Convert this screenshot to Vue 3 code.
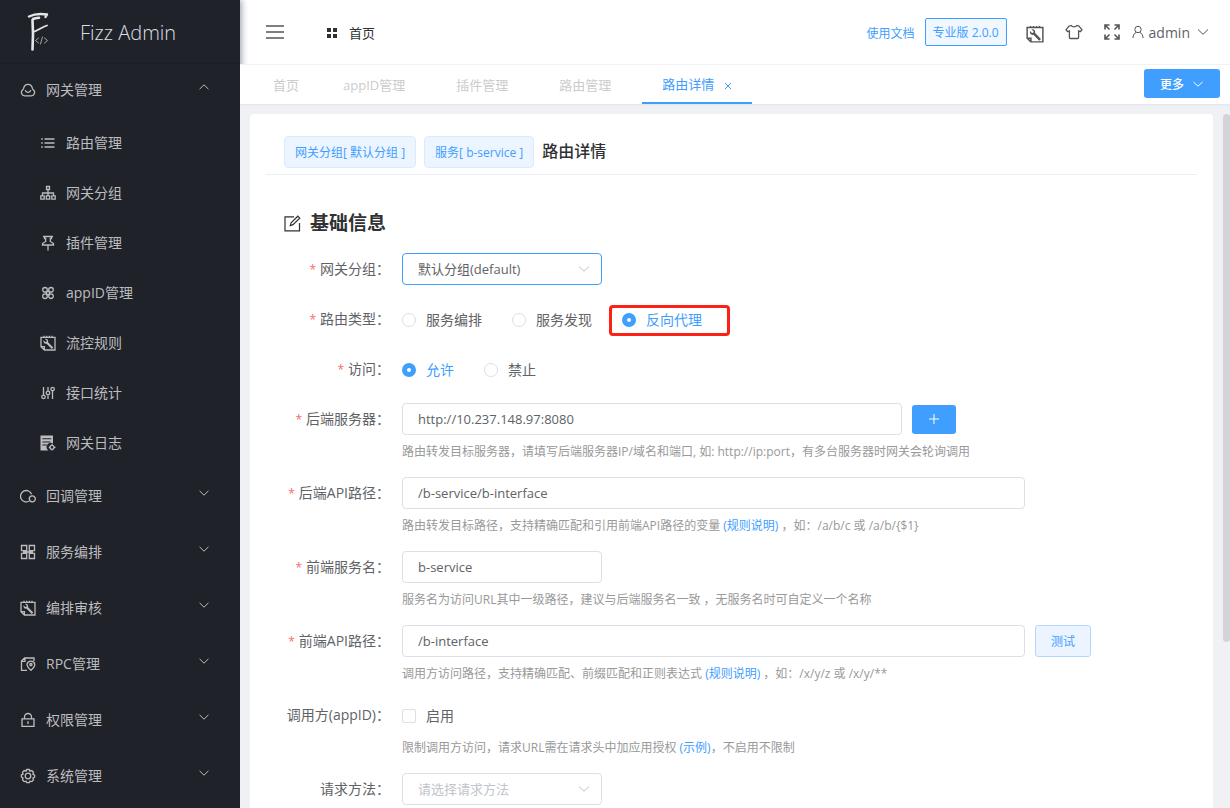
<script setup>
import { ref } from 'vue'

const icons = {
  cloud: { s: 'M4.6 13.8h6.8a3.3 3.3 0 0 0 2.4-5.5c-.5-.6-1-.9-1.3-1.6C12 3.900 10.300 2.300 8 2.300S4 3.900 3.500 6.700c-.3.700-.8 1-1.300 1.600a3.300 3.300 0 0 0 2.400 5.500zM5.200 8.200a2.900 2.900 0 0 0 5.600 0' },
  list: { s: 'M4.500 4h10M4.500 8h10M4.500 12h10M1.200 4h1.600M1.200 8h1.600M1.200 12h1.600' },
  tree: { s: 'M6.500 1.500h3v3h-3zM.8 10.800h3.400v3.400H.8zM6.300 10.800h3.400v3.400H6.300zM11.800 10.800h3.400v3.400h-3.400zM8 4.500v6.300M2.500 10.800V8h11v2.800' },
  pin: { s: 'M3 1.500h10M4.500 1.500v2h1.200v3L2.500 8.500v1.500h11V8.500l-3.200-2v-3h1.200v-2M8 10v5.500' },
  clover: { s: 'M7.300 4.800A2.300 2.300 0 1 1 2.700 4.800a2.300 2.300 0 0 1 4.600 0zM13.300 4.800A2.300 2.300 0 1 1 8.700 4.800a2.300 2.300 0 0 1 4.600 0zM7.300 11.200a2.300 2.300 0 1 1-4.600 0 2.300 2.300 0 0 1 4.600 0zM13.300 11.200a2.300 2.300 0 1 1-4.600 0 2.300 2.300 0 0 1 4.600 0zM6.500 6.500h3v3h-3z' },
  wrench: { s: 'M4.400 15L1 11.700V2.300H15V15zM1 11.700h3.400V15M4 .8v1.500M6.700 .8v1.500M9.400 .8v1.500M12 .8v1.500', f: 'M5 3.900l1.700 1.700-.2 1.200-1.200.2-1.700-1.700c-.7 2.100 1 3.900 3 3.400l5.200 5.200 1.500-1.500-5.200-5.200c.5-2.200-1.200-3.900-3.100-3.300z' },
  sliders: { s: 'M3.500 2v8.200M3.500 13.500v.5M8 2v4M8 9.800V14M12.500 5.800V14M12.500 2v.2M5.200 11.900a1.700 1.700 0 1 1-3.400 0 1.700 1.700 0 0 1 3.400 0zM9.800 7.900a1.800 1.800 0 1 1-3.600 0 1.800 1.800 0 0 1 3.600 0zM14.300 4a1.700 1.700 0 1 1-3.400 0 1.700 1.700 0 0 1 3.400 0z' },
  log: { f: 'M.5.500h12.500v8.200a3.800 3.800 0 0 0-4.500 6.800h-8zM2.300 3.300v1h9v-1zM2.300 6.400v1h8v-1zM2.300 9.500v1h5v-1z', s: 'M14 12.300a2 2 0 1 1-4 0 2 2 0 0 1 4 0zM12 9v1.300M12 14.300v1.200M8.800 12.300H10M14 12.300h1.500' },
  circles: { s: 'M9 13.200A5.700 5.700 0 1 1 11.600 6.300M15.300 10.800a3 3 0 1 1-6 0 3 3 0 0 1 6 0z' },
  menu: { s: 'M1.500 1.500h5.200v5.200H1.500zM9.300 1.500h5.200v5.200H9.300zM1.500 9.300h5.200v5.200H1.500zM9.300 9.300h5.200v5.200H9.300zM3 8h10' },
  rpc: { s: 'M7 14.300H1.500V5l3-3h9.500v3M5 2v3.300H1.500M11 14.300c-2-1.700-4-3.900-4-6a4 4 0 0 1 7.800 0c0 2.100-1.800 4.300-3.800 6zM12 8.400a1.100 1.100 0 1 1-2.200 0 1.100 1.100 0 0 1 2.200 0z' },
  lock: { s: 'M2 6.800h12v7.500H2zM4.500 6.800V5a3.500 3.500 0 0 1 7 0v1.800M8 9.300v2.800' },
  gear: { s: 'M6.700 1.500h2.600l.6 1.600 1.900-.5 1.700 1.900-.6 1.700 1.700 1v2l-1.700.9.600 1.700-1.700 1.800-1.900-.4-.6 1.500H6.700l-.7-1.500-1.800.4-1.700-1.800.5-1.700L1.400 9V7l1.700-.9-.6-1.700 1.700-1.800 1.800.5zM8 5.200a2.800 2.800 0 1 0 0 5.600 2.800 2.800 0 0 0 0-5.600z' },
}

const groupItems = [
  { icon: 'list', text: '路由管理' },
  { icon: 'tree', text: '网关分组' },
  { icon: 'pin', text: '插件管理' },
  { icon: 'clover', text: 'appID管理' },
  { icon: 'wrench', text: '流控规则' },
  { icon: 'sliders', text: '接口统计' },
  { icon: 'log', text: '网关日志' },
]
const menus = [
  { icon: 'cloud', text: '网关管理', children: groupItems },
  { icon: 'circles', text: '回调管理' },
  { icon: 'menu', text: '服务编排' },
  { icon: 'wrench', text: '编排审核' },
  { icon: 'rpc', text: 'RPC管理' },
  { icon: 'lock', text: '权限管理' },
  { icon: 'gear', text: '系统管理' },
]
const tabs = ['首页', 'appID管理', '插件管理', '路由管理']
const types = ['服务编排', '服务发现', '反向代理']

const group = ref('default')
const type = ref('反向代理')
const access = ref('允许')
const backend = ref('http://10.237.148.97:8080')
const backendPath = ref('/b-service/b-interface')
const service = ref('b-service')
const frontPath = ref('/b-interface')
const appEnabled = ref(false)
const method = ref('')
</script>

<template>
  <div class="layout">
    <aside class="side">
      <div class="brand">
        <svg class="logo" width="24" height="40" viewBox="0 0 24 40" fill="none" stroke="#e4e5e7" stroke-linecap="round" stroke-linejoin="round">
          <path d="M2 4.500C6 2.500 14 1.500 20 2.500l-1.500 2.500" stroke-width="2.400" />
          <path d="M6 7c2-.8 4-1 6-1.200M5.500 8l.5 14-.5 15.500" stroke-width="2.600" />
          <path d="M6 20c4-1 9-5 14-6.500" stroke-width="1.800" />
          <path d="M11.500 26l-3 2.500 3 2.500M17.500 26l3 2.500-3 2.500M15.500 25l-2 7" stroke="#a5a6aa" stroke-width="1" />
        </svg>
        <span class="brand-name">Fizz Admin</span>
      </div>
      <nav class="menu">
        <template v-for="m in menus" :key="m.text">
          <a href="#" class="item">
            <svg class="ico" viewBox="0 0 16 16"><path v-if="icons[m.icon].f" class="fill" :d="icons[m.icon].f" /><path class="line" :d="icons[m.icon].s" /></svg>
            <span class="item-text">{{ m.text }}</span>
            <svg class="arrow" viewBox="0 0 12 12"><path class="line thin" :d="m.children ? 'M1.500 8.200L6 3.800l4.500 4.400' : 'M1.500 3.800L6 8.200l4.500-4.400'" /></svg>
          </a>
          <a v-for="c in m.children" :key="c.text" href="#" class="item sub">
            <svg class="ico" viewBox="0 0 16 16"><path v-if="icons[c.icon].f" class="fill" :d="icons[c.icon].f" fill-rule="evenodd" /><path class="line" :d="icons[c.icon].s" /></svg>
            <span class="item-text">{{ c.text }}</span>
          </a>
        </template>
      </nav>
    </aside>

    <div class="body">
      <header class="top">
        <button class="plain burger" type="button" aria-label="折叠菜单">
          <svg width="20" height="16" viewBox="0 0 20 16"><path d="M1 2h18M1 8h18M1 14h18" stroke="#555" stroke-width="1.500" /></svg>
        </button>
        <a href="#" class="crumb">
          <svg width="10" height="10" viewBox="0 0 10 10"><path d="M0 0h4v4H0zM6 0h4v4H6zM0 6h4v4H0zM6 6h4v4H6z" fill="#303133" /></svg>
          <span>首页</span>
        </a>
        <div class="tools">
          <a href="#" class="doc">使用文档</a>
          <button type="button" class="version">专业版 2.0.0</button>
          <button class="plain t-note" type="button" aria-label="工具">
            <svg class="dark" width="18" height="18" viewBox="0 0 16 16"><path class="fill" :d="icons.wrench.f" /><path class="line" :d="icons.wrench.s" /></svg>
          </button>
          <button class="plain t-shirt" type="button" aria-label="主题">
            <svg class="dark" width="18" height="16" viewBox="0 0 18 16"><path class="line" d="M6.300 1.500C7 3.300 11 3.300 11.700 1.500L14 2.200l3 3.600-1.700 1.900-1.700-1v6.800q0 1-1 1H5.400q-1 0-1-1V6.700l-1.700 1L1 5.800l3-3.600z" stroke-linejoin="round" /></svg>
          </button>
          <button class="plain t-full" type="button" aria-label="全屏">
            <svg class="dark" width="16" height="16" viewBox="0 0 16 16"><path class="line thick" d="M1 5.500V1h4.500M1.500 1.500l4 4M10.500 1H15v4.500M14.500 1.500l-4 4M1 10.500V15h4.500M1.500 14.500l4-4M15 10.500V15h-4.500M14.500 14.500l-4-4" /></svg>
          </button>
          <button class="plain user" type="button">
            <svg class="dark" width="12" height="14" viewBox="0 0 12 14"><path class="line thin" d="M9.200 4.500a3.200 3.200 0 1 1-6.400 0 3.200 3.200 0 0 1 6.400 0zM1 13c0-3 1.200-4.800 3.300-5.600M11 13c0-3-1.200-4.800-3.300-5.600" /></svg>
            <span>admin</span>
            <svg class="dark chev" width="12" height="12" viewBox="0 0 12 12"><path class="line thin" d="M1 3.500l5 4.800 5-4.800" /></svg>
          </button>
        </div>
      </header>

      <div class="tabs">
        <nav class="tablist">
          <a v-for="t in tabs" :key="t" href="#" class="tab">{{ t }}</a>
          <a href="#" class="tab active">路由详情
            <svg class="close" width="8" height="8" viewBox="0 0 8 8"><path d="M1 1l6 6M7 1L1 7" stroke="#409eff" /></svg>
          </a>
        </nav>
        <button type="button" class="primary more">更多
          <svg width="12" height="12" viewBox="0 0 12 12" fill="none"><path d="M1.500 4L6 8.200 10.500 4" stroke="#fff" /></svg>
        </button>
      </div>

      <main class="main">
        <section class="card">
          <div class="head">
            <span class="tag">网关分组[ 默认分组 ]</span>
            <span class="tag">服务[ b-service ]</span>
            <h2>路由详情</h2>
          </div>
          <h3>
            <svg width="17" height="17" viewBox="0 0 17 17" fill="none" stroke="#303133" stroke-width="1.200"><path d="M10 1.800H1v14h14.500V8" /><path d="M6.300 10.500l.8-2.800 6.700-6.500 2 2L9 9.700z" /></svg>
            基础信息
          </h3>
          <form class="form" @submit.prevent>
            <div class="row">
              <label class="label req" for="group">网关分组：</label>
              <div class="select focus">
                <select id="group" v-model="group"><option value="default">默认分组(default)</option></select>
                <svg width="12" height="12" viewBox="0 0 12 12" fill="none"><path d="M1 3.500l5 4.800 5-4.800" stroke="#c0c4cc" /></svg>
              </div>
            </div>
            <div class="row" role="radiogroup" aria-labelledby="type-label">
              <span id="type-label" class="label req">路由类型：</span>
              <label v-for="t in types" :key="t" class="choice" :class="{ on: type === t }">
                <input v-model="type" type="radio" name="type" :value="t"><span>{{ t }}</span>
                <i v-if="type === t" class="mark"></i>
              </label>
            </div>
            <div class="row" role="radiogroup" aria-labelledby="access-label">
              <span id="access-label" class="label req">访问：</span>
              <label v-for="t in ['允许', '禁止']" :key="t" class="choice" :class="{ on: access === t }">
                <input v-model="access" type="radio" name="access" :value="t"><span>{{ t }}</span>
              </label>
            </div>
            <div class="row">
              <label class="label req" for="backend">后端服务器：</label>
              <input id="backend" v-model="backend" class="text mid" type="text">
              <button type="button" class="primary add" aria-label="添加">
                <svg width="12" height="12" viewBox="0 0 12 12"><path d="M6 1v10M1 6h10" stroke="#fff" /></svg>
              </button>
              <p class="hint">路由转发目标服务器，请填写后端服务器IP/域名和端口, 如: http://ip:port，有多台服务器时网关会轮询调用</p>
            </div>
            <div class="row">
              <label class="label req" for="backend-path">后端API路径：</label>
              <input id="backend-path" v-model="backendPath" class="text wide" type="text">
              <p class="hint">路由转发目标路径，支持精确匹配和引用前端API路径的变量 <a href="#">(规则说明)</a> ，如：/a/b/c 或 /a/b/{$1}</p>
            </div>
            <div class="row">
              <label class="label req" for="service">前端服务名：</label>
              <input id="service" v-model="service" class="text" type="text">
              <p class="hint">服务名为访问URL其中一级路径，建议与后端服务名一致 ，无服务名时可自定义一个名称</p>
            </div>
            <div class="row">
              <label class="label req" for="front-path">前端API路径：</label>
              <input id="front-path" v-model="frontPath" class="text wide" type="text">
              <button type="button" class="test">测试</button>
              <p class="hint">调用方访问路径，支持精确匹配、前缀匹配和正则表达式 <a href="#">(规则说明)</a> ，如：/x/y/z 或 /x/y/**</p>
            </div>
            <div class="row">
              <span class="label">调用方(appID)：</span>
              <label class="choice"><input v-model="appEnabled" type="checkbox"><span>启用</span></label>
              <p class="hint">限制调用方访问，请求URL需在请求头中加应用授权 <a href="#">(示例)</a>，不启用不限制</p>
            </div>
            <div class="row">
              <label class="label" for="method">请求方法：</label>
              <div class="select empty">
                <select id="method" v-model="method"><option value="">请选择请求方法</option><option>GET</option><option>POST</option></select>
                <svg width="12" height="12" viewBox="0 0 12 12" fill="none"><path d="M1 3.500l5 4.800 5-4.800" stroke="#c0c4cc" /></svg>
              </div>
            </div>
          </form>
        </section>
        <div class="thumb"></div>
      </main>
    </div>
  </div>
</template>

<style>
body { margin: 0; overflow: hidden; }
</style>

<style scoped>
.layout, .layout * { box-sizing: border-box; }
.layout {
  display: flex;
  height: 100vh;
  background: #f0f1f5;
  color: #606266;
  font: 14px/20px "Open Sans", "Noto Sans CJK SC", sans-serif;
}
a { color: inherit; text-decoration: none; }
button, input, select { font-family: inherit; }
h2, h3, p { margin: 0; }

.side {
  position: relative;
  z-index: 1;
  flex: 0 0 240px;
  background: #20222a;
  color: #bcbdbf;
  box-shadow: 2px 0 6px rgba(0, 21, 41, .35);
}
.brand { display: flex; align-items: center; height: 64px; padding-left: 27px; border-bottom: 1px solid #1c1e25; }
.logo { width: 24px; height: 40px; }
.brand-name { margin-left: 29px; padding-top: 2px; font-size: 20px; font-weight: 300; line-height: 28px; color: #dddee0; }
.menu { margin-top: -2px; }
.item { display: flex; align-items: center; height: 56px; padding: 0 30px 0 20px; }
.sub { height: 50px; padding-left: 40px; }
.ico { width: 16px; height: 16px; }
.item-text { margin-left: 10px; flex: 1; }
.arrow { width: 12px; height: 12px; margin-bottom: 6px; }
.line { fill: none; stroke: currentColor; stroke-width: 1.3; }
.fill { fill: currentColor; }
.thick { stroke-width: 1.6; }
.thin { stroke-width: 1; }

.body { flex: 1; min-width: 0; display: flex; flex-direction: column; }
.top { flex: none; display: flex; align-items: center; height: 64px; padding: 0 21px 0 25px; background: #fff; }
.plain { display: flex; align-items: center; padding: 0; border: 0; background: none; color: #606266; }
.dark { color: #555; }
.crumb { display: flex; align-items: center; gap: 12px; margin-left: 42px; padding-top: 2px; font-size: 13px; color: #303133; }
.tools { display: flex; align-items: center; margin-left: auto; }
.doc { padding-top: 4px; font-size: 12px; color: #409eff; }
.version {
  height: 28px; width: 82px; margin-left: 10px; padding: 0;
  border: 1px solid #409eff; border-radius: 2px; background: #f0f7ff; color: #409eff; font-size: 12px;
}
.t-note { margin-left: 19px; padding-top: 3px; }
.t-shirt { margin-left: 21px; }
.t-full { margin-left: 21px; }
.user { margin-left: 12px; font-size: 14px; }
.user span { margin-left: 5px; }
.chev { margin-left: 7px; }

.tabs {
  position: relative; z-index: 3; flex: none;
  display: flex; justify-content: space-between; height: 40px; padding: 0 10px 0 13px;
  border-top: 1px solid #f2f2f4; background: #fff; box-shadow: 0 1px 2px rgba(0, 0, 0, .06);
}
.tablist { display: flex; }
.tab { padding: 0 20px; margin-right: 11px; font-size: 13px; line-height: 40px; color: #ccc; }
.tab:first-child { margin-right: 4px; }
.tab.active { display: flex; align-items: center; gap: 10px; margin: 0; border-bottom: 2px solid #409eff; color: #409eff; }
.close { margin-top: 4px; }
.primary { display: flex; align-items: center; justify-content: center; padding: 0; border: 0; border-radius: 3px; background: #409eff; color: #fff; font-size: 12px; }
.more { width: 76px; height: 29px; margin-top: 4px; gap: 8px; font-weight: 500; }

.main { position: relative; z-index: 2; flex: 1; min-height: 0; padding: 10px 17px 0 10px; overflow: hidden; background: #f0f1f5; }
.card { padding: 22px 16px 16px; border-radius: 4px; background: #fff; }
.thumb { position: absolute; top: 10px; right: 0; width: 7px; height: 75%; border-radius: 4px; background: #d3d4d8; }
.head { display: flex; gap: 8px; height: 39px; padding-left: 18px; border-bottom: 1px solid #ebeef5; }
.tag { height: 32px; padding: 0 10px; border: 1px solid #d9ecff; border-radius: 4px; background: #ecf5ff; color: #409eff; font-size: 12px; line-height: 32px; }
h2 { font-size: 16px; font-weight: 500; line-height: 30px; color: #303133; }
h3 { display: flex; align-items: center; gap: 9px; margin: 34px 0 0 18px; font-size: 19px; font-weight: 700; line-height: 28px; color: #303133; }

.form { margin-top: 16px; }
.row { display: flex; flex-wrap: wrap; align-items: center; margin-bottom: 18px; min-height: 32px; }
.label { width: 124px; margin-right: 12px; line-height: 32px; text-align: right; white-space: nowrap; }
.req::before { content: "*"; margin-right: 4px; font-size: 12px; line-height: 1; color: #f56c6c; }
.text {
  width: 200px; height: 32px; padding: 0 15px; border: 1px solid #dcdfe6; border-radius: 4px;
  background: #fff; color: #606266; font-size: 13px; outline: none;
}
.mid { width: 500px; }
.wide { width: 623px; }
.hint { width: 100%; padding: 9px 0 0 136px; font-size: 12px; line-height: 15px; color: #999; }
.hint a { color: #409eff; }
.select { display: grid; align-items: center; width: 200px; }
.select > * { grid-area: 1 / 1; }
select {
  width: 100%; height: 32px; padding: 0 30px 0 15px; appearance: none; border: 1px solid #dcdfe6; border-radius: 4px;
  background: #fff; color: #606266; font-size: 13px; outline: none;
}
.select svg { justify-self: end; margin-right: 12px; pointer-events: none; }
.focus select { border-color: #409eff; }
.empty select { color: #c0c4cc; }
.choice { position: relative; display: flex; align-items: center; gap: 10px; height: 32px; margin-right: 30px; padding-top: 2px; }
.choice input { appearance: none; width: 14px; height: 14px; margin: 0; border: 1px solid #dcdfe6; border-radius: 50%; background: #fff; }
.choice input[type="checkbox"] { border-radius: 2px; }
.choice input:checked { border: 5px solid #409eff; }
.choice.on { color: #409eff; }
.mark { position: absolute; inset: 2px -28px -1px -13px; border: 3px solid #fb2114; border-radius: 4px; }
.add { width: 44px; height: 29px; margin-left: 10px; }
.test { width: 56px; height: 32px; margin-left: 10px; padding: 0; border: 1px solid #b3d8ff; border-radius: 3px; background: #ecf5ff; color: #409eff; font-size: 12px; }
</style>
